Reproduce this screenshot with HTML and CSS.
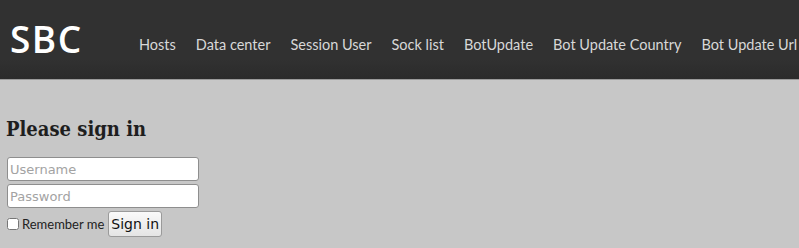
FILE: index.html
```html
<!DOCTYPE html>
<html>
<head>
<meta charset="utf-8">
<link rel="stylesheet" href="styles.css">
</head>
<body>
<header class="topbar">
  <a class="brand" href="#">SBC</a>
  <nav class="nav">
    <a href="#">Hosts</a>
    <a href="#">Data center</a>
    <a href="#">Session User</a>
    <a href="#">Sock list</a>
    <a href="#">BotUpdate</a>
    <a href="#">Bot Update Country</a>
    <a href="#">Bot Update Url</a>
  </nav>
</header>
<main class="content">
  <h2 class="title">Please sign in</h2>
  <form class="signin">
    <input class="field" type="text" placeholder="Username">
    <input class="field" type="password" placeholder="Password">
    <div class="row">
      <label class="remember"><input class="check" type="checkbox"><span>Remember me</span></label>
      <button class="btn" type="button">Sign in</button>
    </div>
  </form>
</main>
</body>
</html>
```
FILE: styles.css
```css
html, body {
  margin: 0;
  padding: 0;
}
body {
  background: #c7c7c7;
  font-family: "Lato", "Open Sans", sans-serif;
  overflow: hidden;
}
.topbar {
  height: 80px;
  background: linear-gradient(#313131 0%, #313131 75%, #2b2b2b 100%);
  border-bottom: 1px solid #9a9a9a;
  display: flex;
  align-items: center;
  box-sizing: border-box;
}
.brand {
  display: block;
  width: 128px;
  flex: none;
  color: #fff;
  text-decoration: none;
  font-family: "Open Sans", sans-serif;
  font-weight: 600;
  font-size: 37px;
  letter-spacing: 1.5px;
  margin-left: 10px;
  margin-top: -3px;
}
.nav {
  display: flex;
  margin-left: 1px;
  margin-top: 10px;
}
.nav a {
  color: #d8d8d8;
  text-decoration: none;
  font-size: 14.5px;
  margin-right: 20px;
  white-space: nowrap;
}
.content {
  padding: 37px 6px 0;
}
.title {
  margin: 0 0 16px;
  font-family: "DejaVu Serif Condensed", "DejaVu Serif", serif;
  font-size: 20px;
  font-weight: bold;
  color: #1e1e1e;
}
.signin {
  display: flex;
  flex-direction: column;
  gap: 3px;
  align-items: flex-start;
}
.field {
  width: 192px;
  height: 24px;
  box-sizing: border-box;
  border: 1px solid #8e8e8e;
  border-radius: 3px;
  background: #fff;
  margin: 0 0 0 1px;
  padding: 0 2px;
  font-family: "DejaVu Sans", sans-serif;
  font-size: 13px;
}
.field::placeholder {
  color: #a3a3a3;
}
.row {
  display: flex;
  align-items: center;
  margin-top: 0;
}
.remember {
  display: flex;
  align-items: center;
  font-size: 13px;
  color: #222;
}
.check {
  margin: 0 3px 0 1px;
  width: 12px;
  height: 12px;
}
.btn {
  margin-left: 4px;
  height: 26px;
  padding: 0 2px;
  font-family: "DejaVu Sans", sans-serif;
  font-size: 14px;
  color: #111;
  border: 1px solid #9a9a9a;
  border-radius: 3px;
  background: linear-gradient(#fafafa, #e4e4e4);
}
```
